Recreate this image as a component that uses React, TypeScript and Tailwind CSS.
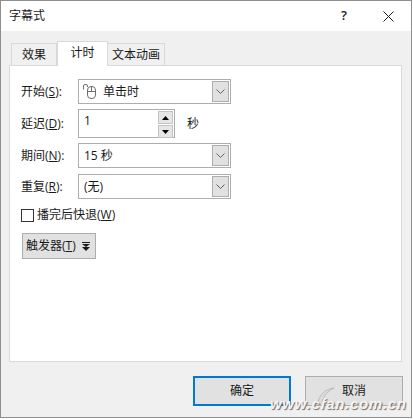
import { ReactNode } from 'react';

const Chevron = () => (
    <svg width="9" height="6" viewBox="0 0 9 6" fill="none" stroke="#606060" strokeWidth="1">
        <path d="M0.5 0.5 L4.5 4.5 L8.5 0.5" />
    </svg>
);

const Select = ({ children }: { children: ReactNode }) => (
    <div className="flex h-[25px] w-[153px] items-center justify-between border border-[#adadad] bg-white pl-[5px] pr-px">
        <div className="flex items-center text-[12px] text-[#1a1a1a]">{children}</div>
        <div className="flex h-[21px] w-[17px] items-center justify-center border border-[#adadad] bg-[#e1e1e1]">
            <Chevron />
        </div>
    </div>
);

const Label = ({ text, accel }: { text: string; accel: string }) => (
    <span className="w-[57px] text-[12px] text-[#1a1a1a]">
        {text}(<span className="underline">{accel}</span>):
    </span>
);

const SpinButton = ({ up }: { up?: boolean }) => (
    <div className="flex h-[13px] w-[15px] items-center justify-center border border-[#c4c4c4] bg-[#e6e6e6]">
        <svg width="7" height="4" viewBox="0 0 7 4" fill="#000000">
            <path d={up ? 'M3.5 0 L7 4 L0 4 Z' : 'M0 0 L7 0 L3.5 4 Z'} />
        </svg>
    </div>
);

const App = () => {
    return (
        <div className="h-[419px] w-[413px] overflow-hidden bg-white">
            <div
                className="relative flex h-[418px] w-[412px] flex-col bg-[#8f8f8f] pb-px pl-px pr-px pt-px"
                style={{ fontFamily: '"Open Sans", "Noto Sans CJK SC", sans-serif' }}
            >
                <div className="flex h-[30px] shrink-0 items-center justify-between bg-white pl-[8px] pr-[17px]">
                    <span className="text-[12px] text-[#1a1a1a]">字幕式</span>
                    <div className="flex items-center gap-[36px]">
                        <span className="text-[13px] font-semibold text-[#1a1a1a]">?</span>
                        <svg width="11" height="11" viewBox="0 0 11 11" stroke="#1a1a1a" strokeWidth="1">
                            <path d="M0.5 0.5 L10.5 10.5 M10.5 0.5 L0.5 10.5" />
                        </svg>
                    </div>
                </div>

                <div className="flex flex-1 flex-col bg-[#f0f0f0] pl-[8px] pr-[9px] pt-[10px]">
                    <div className="flex h-[24px] items-end pl-[2px]">
                        <div className="flex h-[22px] w-[46px] items-center justify-center border border-b-0 border-[#d9d9d9] text-[12px] text-[#1a1a1a]">效果</div>
                        <div className="z-10 -mb-px flex h-[25px] w-[51px] items-center justify-center border border-b-0 border-[#d9d9d9] bg-white pb-[3px] text-[12px] text-[#1a1a1a]">计时</div>
                        <div className="flex h-[22px] w-[57px] items-center justify-center border border-b-0 border-l-0 border-[#d9d9d9] text-[12px] text-[#1a1a1a]">文本动画</div>
                    </div>

                    <div className="flex h-[297px] flex-col border border-[#d9d9d9] bg-white pl-[11px] pt-[13px]">
                        <div className="flex items-center">
                            <Label text="开始" accel="S" />
                            <Select>
                                <svg width="14" height="15" viewBox="0 0 14 15" fill="none" stroke="#6e6e6e" strokeWidth="1" className="-ml-px mr-[6px]">
                                    <path d="M0.5 5.5 V2 Q0.5 0.5 2 0.5 H3 Q4.5 0.5 4.5 2 V3" />
                                    <rect x="4.5" y="2.5" width="8" height="12" rx="3.5" />
                                    <path d="M4.5 7.5 H12.5 M8.5 2.5 V7.5" />
                                </svg>
                                单击时
                            </Select>
                        </div>

                        <div className="mt-[5px] flex items-center">
                            <Label text="延迟" accel="D" />
                            <div className="flex h-[29px] w-[97px] items-start justify-between border border-[#adadad] bg-white pl-[5px] pr-px pt-px">
                                <span className="text-[12px] leading-[20px] text-[#1a1a1a]">1</span>
                                <div className="flex flex-col gap-px">
                                    <SpinButton up />
                                    <SpinButton />
                                </div>
                            </div>
                            <span className="ml-[12px] text-[12px] text-[#1a1a1a]">秒</span>
                        </div>

                        <div className="mt-[5px] flex items-center">
                            <Label text="期间" accel="N" />
                            <Select>15 秒</Select>
                        </div>

                        <div className="mt-[6px] flex items-center">
                            <Label text="重复" accel="R" />
                            <Select>(无)</Select>
                        </div>

                        <div className="mt-[7px] flex items-center">
                            <div className="h-[13px] w-[13px] border border-[#333333] bg-white" />
                            <span className="ml-[3px] text-[12px] text-[#1a1a1a]">
                                播完后快退(<span className="underline">W</span>)
                            </span>
                        </div>

                        <div className="ml-px mt-[9px] flex h-[26px] w-[74px] items-center border border-[#adadad] bg-[#e1e1e1] pl-[3px]">
                            <span className="text-[12px] text-[#1a1a1a]">
                                触发器(<span className="underline">T</span>)
                            </span>
                            <svg width="8" height="9" viewBox="0 0 8 9" fill="#1a1a1a" className="ml-[6px]">
                                <path d="M0 0 H8 V1 H0 Z M0 2 H8 L4 5 Z M0 5 H8 L4 9 Z" />
                            </svg>
                        </div>
                    </div>

                    <div className="-mr-px mt-[14px] flex justify-end gap-[14px]">
                        <div className="flex h-[30px] w-[98px] items-center justify-center border-2 border-[#0078d7] bg-[#e1e1e1] text-[12px] text-[#1a1a1a]">确定</div>
                        <div className="flex h-[30px] w-[98px] items-center justify-center border border-[#adadad] bg-[#e1e1e1] text-[12px] text-[#1a1a1a]">取消</div>
                    </div>
                </div>

                {/* watermark over the corner */}
                <div
                    className="absolute left-[270px] top-[393px] text-[15px] font-bold italic tracking-[0.7px] text-[#f4f4f4]"
                    style={{ fontFamily: '"Liberation Sans", sans-serif', textShadow: '1px 1px 1px #6b6b6b' }}
                >
                    www.cfan.com.cn
                </div>
                <svg width="18" height="16" viewBox="0 0 18 16" fill="none" className="absolute left-[317px] top-[387px]">
                    <path d="M1 15 C3 7 9 2 17 1 C11 4 7 8 5 15" fill="#dcdcdc" stroke="#9a9a9a" strokeWidth="0.5" />
                </svg>
            </div>
        </div>
    );
};

export default App;
